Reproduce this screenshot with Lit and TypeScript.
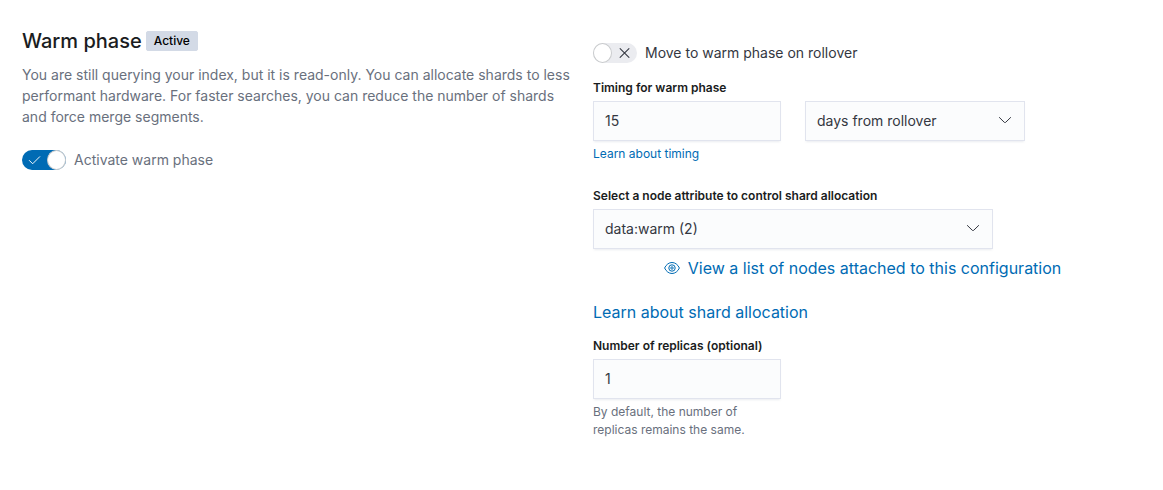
import { LitElement, html, css, svg } from "lit";
import { customElement, state } from "lit/decorators.js";

const chevron = html`<svg class="chevron" width="16" height="16" viewBox="0 0 16 16" aria-hidden="true">
  <path d="M2.400 5.500 7.300 10.300a1 1 0 0 0 1.400 0L13.600 5.500" fill="none" stroke="currentColor" stroke-linecap="round"/>
</svg>`;

const checkIcon = svg`<path d="M2.500 8.500 6 12 13.500 4.500" fill="none" stroke="currentColor" stroke-linecap="round" stroke-linejoin="round"/>`;
const crossIcon = svg`<path d="M3.300 3.300 12.700 12.700 M12.700 3.300 3.300 12.700" fill="none" stroke="currentColor" stroke-width="1.100" stroke-linecap="round"/>`;

@customElement("app-root")
export class AppRoot extends LitElement {
  @state() private warmEnabled = true;
  @state() private onRollover = false;

  static styles = css`
    :host {
      display: block;
      font-family: Inter, "Liberation Sans", sans-serif;
      font-size: 14px;
      line-height: 21px;
      color: #343741;
      background: #fff;
    }
    * { box-sizing: border-box; }
    .page {
      display: grid;
      grid-template-columns: 1fr 1fr;
      gap: 16px;
      padding: 28px 15px 28px 22px;
    }
    .title {
      display: flex;
      align-items: center;
      gap: 4px;
      margin: 0;
      font-size: 20px;
      line-height: 26px;
      font-weight: 500;
      color: #1a1c21;
    }
    .badge {
      padding: 0 7px;
      border: 1px solid #d3dae6;
      border-radius: 2px;
      background: #d3dae6;
      color: #000;
      font-size: 12px;
      line-height: 18px;
      font-weight: 500;
    }
    .description { margin: 10px 0 23px; color: #69707d; }
    .toggle {
      display: flex;
      align-items: center;
      gap: 8px;
      width: fit-content;
      line-height: 20px;
    }
    .switch {
      appearance: none;
      display: flex;
      flex: none;
      align-items: center;
      justify-content: space-between;
      width: 44px;
      height: 20px;
      margin: 0;
      padding: 0;
      border: 0;
      border-radius: 20px;
      background: #ebecf0;
      color: #343741;
      cursor: pointer;
    }
    .switch.on { flex-direction: row-reverse; background: #006bb4; color: #fff; }
    .knob {
      width: 20px;
      height: 20px;
      border: 1px solid #c9cbcd;
      border-radius: 50%;
      background: #fff;
    }
    .mark { margin: 0 5px; }
    .muted { color: #69707d; }
    .fields { padding-top: 15px; min-width: 0; }
    .label {
      display: block;
      margin-bottom: 4px;
      color: #1a1c21;
      font-size: 12px;
      line-height: 18px;
      font-weight: 600;
    }
    .timing { display: flex; align-items: flex-end; gap: 24px; margin-top: 16px; }
    .short { width: 188px; }
    .unit { width: 220px; }
    .wide { max-width: 400px; }
    .control {
      display: block;
      width: 100%;
      height: 40px;
      margin: 0;
      padding: 0 11px 2px;
      appearance: none;
      border: 1px solid #e1e4ee;
      border-radius: 0;
      background: #fbfcfd;
      box-shadow: 0 2px 2px -1px #98a2b333;
      color: #343741;
      font: inherit;
    }
    .select { display: grid; align-items: center; }
    .select > * { grid-area: 1 / 1; }
    .chevron { justify-self: end; margin: 0 12px 2px 0; pointer-events: none; }
    a { color: #006bb4; text-decoration: none; }
    .small { display: block; padding-top: 4px; font-size: 12px; line-height: 18px; }
    .group { margin-top: 24px; }
    .nodes {
      display: flex;
      justify-content: center;
      margin-top: 7px;
      padding-right: 16px;
      font-size: 16px;
      line-height: 24px;
    }
    .nodes a { display: flex; align-items: center; gap: 8px; }
    .allocation { display: block; width: fit-content; margin: 20px 0 13px; font-size: 16px; line-height: 24px; }
  `;

  render() {
    return html`<main class="page">
      <section>
        <h2 class="title">Warm phase <span class="badge">Active</span></h2>
        <p class="description">
          You are still querying your index, but it is read-only. You can allocate shards to less
          performant hardware. For faster searches, you can reduce the number of shards and force
          merge segments.
        </p>
        <div class="toggle">
          ${this.renderSwitch("warm", this.warmEnabled, () => (this.warmEnabled = !this.warmEnabled))}
          <label class="muted" for="warm">Activate warm phase</label>
        </div>
      </section>
      <section class="fields">
        <div class="toggle">
          ${this.renderSwitch("rollover", this.onRollover, () => (this.onRollover = !this.onRollover))}
          <label for="rollover">Move to warm phase on rollover</label>
        </div>
        <div class="timing">
          <div class="short">
            <label class="label" for="timing">Timing for warm phase</label>
            <input class="control" id="timing" type="text" inputmode="numeric" value="15" />
          </div>
          <div class="select unit">
            <select class="control" aria-label="Timing unit"><option>days from rollover</option></select>
            ${chevron}
          </div>
        </div>
        <a class="small short" href="#timing">Learn about timing</a>
        <div class="group">
          <label class="label" for="node">Select a node attribute to control shard allocation</label>
          <div class="select wide">
            <select class="control" id="node"><option>data:warm (2)</option></select>
            ${chevron}
          </div>
        </div>
        <div class="nodes">
          <a href="#nodes">
            <svg width="16" height="16" viewBox="0 0 16 16" fill="none" stroke="currentColor" aria-hidden="true">
              <path d="M.6 8C2.200 4.500 5 2.500 8 2.500s5.800 2 7.400 5.500C13.800 11.500 11 13.500 8 13.500S2.200 11.500.6 8z"/>
              <circle cx="8" cy="8" r="3.200"/><circle cx="8" cy="8" r="1.200"/>
            </svg>
            View a list of nodes attached to this configuration
          </a>
        </div>
        <a class="allocation" href="#allocation">Learn about shard allocation</a>
        <div class="short">
          <label class="label" for="replicas">Number of replicas (optional)</label>
          <input class="control" id="replicas" type="text" inputmode="numeric" value="1" aria-describedby="replicas-help" />
          <span class="small muted" id="replicas-help">By default, the number of replicas remains the same.</span>
        </div>
      </section>
    </main>`;
  }

  private renderSwitch(id: string, on: boolean, toggle: () => void) {
    return html`<button class="switch ${on ? "on" : ""}" id=${id} type="button" role="switch" aria-checked=${on} @click=${toggle}>
      <span class="knob"></span>
      <svg class="mark" width="16" height="16" viewBox="0 0 16 16" aria-hidden="true">${on ? checkIcon : crossIcon}</svg>
    </button>`;
  }
}
